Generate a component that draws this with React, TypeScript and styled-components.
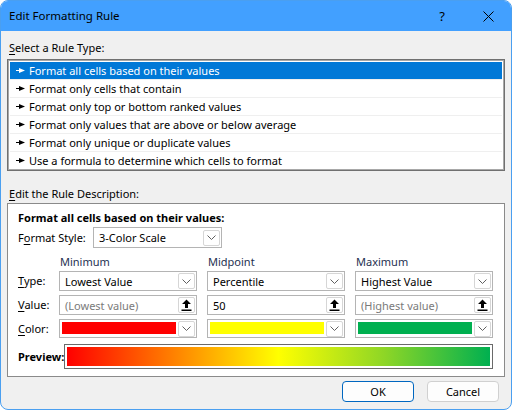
import React from 'react';
import styled, { createGlobalStyle } from 'styled-components';

const GlobalStyle = createGlobalStyle`
  html, body {
    margin: 0;
    padding: 0;
    background: #ffffff;
  }
  body {
    font-family: "Noto Sans", "Open Sans", sans-serif;
    font-size: 11px;
    color: #000;
  }
`;

const Window = styled.div`
  box-sizing: border-box;
  width: 512px;
  height: 410px;
  border: 1px solid #4a9ff0;
  border-radius: 8px;
  overflow: hidden;
  background: #f0f0f0;
  display: flex;
  flex-direction: column;
`;

const TitleBar = styled.div`
  height: 30px;
  background: #42a0ff;
  display: flex;
  align-items: center;
  padding-left: 8px;
`;

const Title = styled.div`
  flex: 1;
  font-size: 11.5px;
  line-height: 16px;
`;

const TitleButton = styled.div<{ $w: number }>`
  width: ${p => p.$w}px;
  height: 30px;
  display: flex;
  align-items: center;
  justify-content: center;
  font-size: 13px;
`;

const Body = styled.div`
  padding: 0 6px;
  display: flex;
  flex-direction: column;
`;

const GroupLabel = styled.div<{ $top: number }>`
  margin-top: ${p => p.$top}px;
  margin-left: 2px;
  line-height: 16px;
  height: 16px;
`;

const U = styled.span`
  text-decoration: underline;
  text-underline-offset: 2px;
`;

const ListBox = styled.div`
  margin-top: 3px;
  border: 1px solid #707070;
  box-shadow: inset 0 0 0 1px #a8a8a8;
  background: #fff;
  padding: 2px 2px 1px 2px;
  display: flex;
  flex-direction: column;
`;

const RuleRow = styled.div<{ $selected?: boolean; $last?: boolean }>`
  height: 17px;
  display: flex;
  align-items: center;
  gap: 4px;
  padding-left: 6px;
  background: ${p => (p.$selected ? '#0078d7' : '#fff')};
  color: ${p => (p.$selected ? '#fff' : '#000')};
  border-bottom: ${p => (p.$last ? 'none' : '1px solid #efefef')};
  white-space: nowrap;
`;

const DescBox = styled.div`
  margin-top: 1px;
  height: 174px;
  box-sizing: border-box;
  border: 1px solid #8a8a8a;
  background: #fff;
  padding: 6px 10px 0 10px;
  display: flex;
  flex-direction: column;
`;

const Heading = styled.div`
  font-weight: bold;
  line-height: 16px;
`;

const StyleRow = styled.div`
  margin-top: 1px;
  display: flex;
  align-items: center;
`;

const StyleLabel = styled.div`
  width: 75px;
  line-height: 16px;
`;

const Grid = styled.div`
  margin-top: 6px;
  display: grid;
  grid-template-columns: 31px 138px 138px 138px;
  column-gap: 10px;
  row-gap: 4px;
  align-items: center;
`;

const ColHead = styled.div`
  color: #1e3050;
  line-height: 16px;
  padding-left: 1px;
  margin-bottom: -3px;
  align-self: start;
`;

const FieldLabel = styled.div`
  line-height: 16px;
  white-space: nowrap;
`;

const Field = styled.div<{ $w?: number; $h?: number }>`
  box-sizing: border-box;
  width: ${p => (p.$w ? `${p.$w}px` : '100%')};
  height: ${p => p.$h ?? 20}px;
  border: 1px solid #b4b4b4;
  background: #fff;
  display: flex;
  align-items: center;
  padding: 1px;
`;

const FieldText = styled.div<{ $muted?: boolean }>`
  flex: 1;
  padding-left: 4px;
  color: ${p => (p.$muted ? '#7a7a7a' : '#000')};
  white-space: nowrap;
  overflow: hidden;
`;

const Swatch = styled.div<{ $color: string }>`
  flex: 1;
  align-self: stretch;
  margin: 1px 2px 2px 1px;
  background: ${p => p.$color};
`;

const MiniButton = styled.div`
  box-sizing: border-box;
  width: 17px;
  height: 16px;
  border: 1px solid #d6d6d6;
  border-radius: 2px;
  background: #fff;
  display: flex;
  align-items: center;
  justify-content: center;
`;

const PreviewRow = styled.div`
  margin-top: 6px;
  display: flex;
  align-items: center;
`;

const PreviewLabel = styled.div`
  font-weight: bold;
  width: 46px;
`;

const PreviewFrame = styled.div`
  width: 429px;
  height: 25px;
  box-sizing: border-box;
  border: 1px solid #6a6a6a;
  padding: 2px;
  background: #fff;
`;

const Gradient = styled.div`
  height: 100%;
  background: linear-gradient(to right, #ff0000 0%, #ff8000 25%, #ffff00 50%, #8ed626 75%, #00b050 100%);
`;

const Footer = styled.div`
  margin-top: 4px;
  display: flex;
  justify-content: flex-end;
  gap: 13px;
  padding-right: 6px;
`;

const DialogButton = styled.button<{ $primary?: boolean }>`
  width: 72px;
  height: 21px;
  box-sizing: border-box;
  border: 1px solid ${p => (p.$primary ? '#0067c0' : '#d0d0d0')};
  border-radius: 4px;
  background: #fdfdfd;
  font: inherit;
  color: #000;
  padding: 0;
`;

const Chevron = () => (
  <svg width="9" height="5" viewBox="0 0 9 5">
    <path d="M0.5 0.5 L4.5 4.5 L8.5 0.5" fill="none" stroke="#606060" strokeWidth="1" />
  </svg>
);

const UploadIcon = () => (
  <svg width="11" height="12" viewBox="0 0 11 12">
    <path d="M5.5 0.5 L10 5 L7 5 L7 9 L4 9 L4 5 L1 5 Z" fill="#000" />
    <rect x="0.5" y="10.5" width="10" height="1.5" fill="#000" />
  </svg>
);

const RuleArrow = () => (
  <svg width="9" height="5" viewBox="0 0 9 5">
    <rect x="0" y="2" width="4" height="1" fill="currentColor" />
    <path d="M3 0 L9 2.5 L3 5 Z" fill="currentColor" />
  </svg>
);

const Combo = ({ text }: { text: string }) => (
  <Field>
    <FieldText>{text}</FieldText>
    <MiniButton><Chevron /></MiniButton>
  </Field>
);

const ValueBox = ({ text, muted }: { text: string; muted?: boolean }) => (
  <Field>
    <FieldText $muted={muted}>{text}</FieldText>
    <MiniButton><UploadIcon /></MiniButton>
  </Field>
);

const ColorCombo = ({ color }: { color: string }) => (
  <Field $h={19}>
    <Swatch $color={color} />
    <MiniButton><Chevron /></MiniButton>
  </Field>
);

const rules = [
  'Format all cells based on their values',
  'Format only cells that contain',
  'Format only top or bottom ranked values',
  'Format only values that are above or below average',
  'Format only unique or duplicate values',
  'Use a formula to determine which cells to format',
];

export default function App() {
  return (
    <>
      <GlobalStyle />
      <Window>
        <TitleBar>
          <Title>Edit Formatting Rule</Title>
          <TitleButton $w={46}>?</TitleButton>
          <TitleButton $w={46}>
            <svg width="11" height="11" viewBox="0 0 11 11">
              <path d="M0.5 0.5 L10.5 10.5 M10.5 0.5 L0.5 10.5" stroke="#000" strokeWidth="1" />
            </svg>
          </TitleButton>
        </TitleBar>
        <Body>
          <GroupLabel $top={9}><U>S</U>elect a Rule Type:</GroupLabel>
          <ListBox>
            {rules.map((r, i) => (
              <RuleRow key={r} $selected={i === 0} $last={i === rules.length - 1}>
                <RuleArrow />
                {r}
              </RuleRow>
            ))}
          </ListBox>
          <GroupLabel $top={15}><U>E</U>dit the Rule Description:</GroupLabel>
          <DescBox>
            <Heading>Format all cells based on their values:</Heading>
            <StyleRow>
              <StyleLabel>F<U>o</U>rmat Style:</StyleLabel>
              <Field $w={129} $h={21}>
                <FieldText>3-Color Scale</FieldText>
                <MiniButton><Chevron /></MiniButton>
              </Field>
            </StyleRow>
            <Grid>
              <div />
              <ColHead>Minimum</ColHead>
              <ColHead>Midpoint</ColHead>
              <ColHead>Maximum</ColHead>

              <FieldLabel><U>T</U>ype:</FieldLabel>
              <Combo text="Lowest Value" />
              <Combo text="Percentile" />
              <Combo text="Highest Value" />

              <FieldLabel><U>V</U>alue:</FieldLabel>
              <ValueBox text="(Lowest value)" muted />
              <ValueBox text="50" />
              <ValueBox text="(Highest value)" muted />

              <FieldLabel><U>C</U>olor:</FieldLabel>
              <ColorCombo color="#ff0000" />
              <ColorCombo color="#ffff00" />
              <ColorCombo color="#00b050" />
            </Grid>
            <PreviewRow>
              <PreviewLabel>Preview:</PreviewLabel>
              <PreviewFrame><Gradient /></PreviewFrame>
            </PreviewRow>
          </DescBox>
          <Footer>
            <DialogButton $primary>OK</DialogButton>
            <DialogButton>Cancel</DialogButton>
          </Footer>
        </Body>
      </Window>
    </>
  );
}
